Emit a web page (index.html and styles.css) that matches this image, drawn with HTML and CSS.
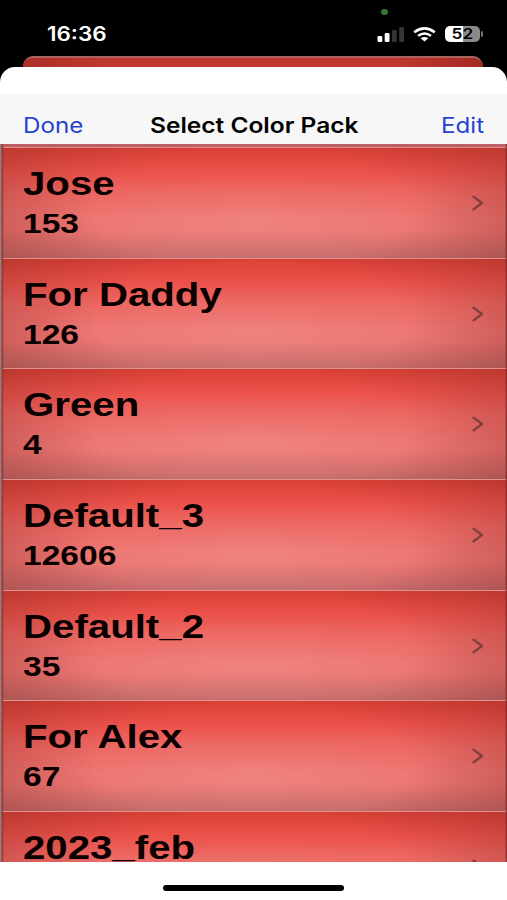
FILE: index.html
```html
<!DOCTYPE html>
<html lang="en">
<head>
    <meta charset="UTF-8">
    <meta name="viewport" content="width=device-width, initial-scale=1.0">
    <title>Select Color Pack</title>
    <link rel="stylesheet" href="styles.css">
</head>
<body>
<div class="status-bar">
    <span class="time"><span class="wide">16:36</span></span>
    <span class="camera-dot"></span>
    <div class="indicators">
        <svg class="signal" width="27" height="15" viewBox="0 0 27 15">
            <rect x="0.5" y="9" width="4.8" height="6" rx="1.2" fill="#fff"/>
            <rect x="7.7" y="6" width="4.8" height="9" rx="1.2" fill="#fff"/>
            <rect x="15" y="3" width="4.8" height="12" rx="1.2" fill="#353535"/>
            <rect x="22.2" y="0" width="4.8" height="15" rx="1.2" fill="#353535"/>
        </svg>
        <svg class="wifi" width="23" height="15" viewBox="0 0 23 15">
            <path d="M1.2 5.2Q11.5-2.4 21.8 5.2" fill="none" stroke="#fff" stroke-width="2.5"/>
            <path d="M5 8.9Q11.5 4 18 8.9" fill="none" stroke="#fff" stroke-width="2.4"/>
            <path d="M7.7 11.2Q11.5 8.6 15.3 11.2L11.5 14.6Z" fill="#fff"/>
        </svg>
        <div class="battery"><span class="wide">52</span></div>
    </div>
</div>
<div class="back-card"></div>
<div class="sheet">
    <div class="nav">
        <span class="nav-btn left"><span class="wide">Done</span></span>
        <span class="nav-title"><span class="wide">Select Color Pack</span></span>
        <span class="nav-btn right"><span class="wide">Edit</span></span>
    </div>
    <div class="list">
        <div class="row">
            <div class="info"><div class="name">Jose</div><div class="count">153</div></div>
            <svg class="chevron" viewBox="0 0 12 16"><path d="M1.5 1.7L10 8L1.5 14.3"/></svg>
        </div>
        <div class="row">
            <div class="info"><div class="name">For Daddy</div><div class="count">126</div></div>
            <svg class="chevron" viewBox="0 0 12 16"><path d="M1.5 1.7L10 8L1.5 14.3"/></svg>
        </div>
        <div class="row">
            <div class="info"><div class="name">Green</div><div class="count">4</div></div>
            <svg class="chevron" viewBox="0 0 12 16"><path d="M1.5 1.7L10 8L1.5 14.3"/></svg>
        </div>
        <div class="row">
            <div class="info"><div class="name">Default<span class="underscore">_</span>3</div><div class="count">12606</div></div>
            <svg class="chevron" viewBox="0 0 12 16"><path d="M1.5 1.7L10 8L1.5 14.3"/></svg>
        </div>
        <div class="row">
            <div class="info"><div class="name">Default<span class="underscore">_</span>2</div><div class="count">35</div></div>
            <svg class="chevron" viewBox="0 0 12 16"><path d="M1.5 1.7L10 8L1.5 14.3"/></svg>
        </div>
        <div class="row">
            <div class="info"><div class="name">For Alex</div><div class="count">67</div></div>
            <svg class="chevron" viewBox="0 0 12 16"><path d="M1.5 1.7L10 8L1.5 14.3"/></svg>
        </div>
        <div class="row">
            <div class="info"><div class="name">2023<span class="underscore">_</span>feb</div></div>
            <svg class="chevron" viewBox="0 0 12 16"><path d="M1.5 1.7L10 8L1.5 14.3"/></svg>
        </div>
    </div>
    <div class="bottom">
        <div class="home-bar"></div>
    </div>
</div>
</body>
</html>
```
FILE: styles.css
```css
* {
    box-sizing: border-box;
}

body {
    margin: 0;
    height: 900px;
    overflow: hidden;
    background-color: #000;
    font-family: Inter, "Liberation Sans", sans-serif;
    display: flex;
    flex-direction: column;
}

.wide {
    display: inline-block;
    transform: scaleX(1.15);
    transform-origin: left center;
    white-space: nowrap;
}

.status-bar {
    position: relative;
    flex: none;
    height: 56px;
    padding: 12px 24px 0 47px;
    display: flex;
    justify-content: space-between;
    align-items: center;
    color: #fff;
}

.time {
    font-size: 19.5px;
    font-weight: 600;
}

.camera-dot {
    position: absolute;
    left: 381px;
    top: 9px;
    width: 7px;
    height: 6px;
    border-radius: 50%;
    background-color: #35793a;
}

.indicators {
    display: flex;
    align-items: center;
    gap: 9px;
}

.battery {
    position: relative;
    width: 35px;
    height: 16px;
    margin-right: 3px;
    border-radius: 5px;
    background: linear-gradient(90deg, #fff 52%, #8a8a8a 52%);
    color: #000;
    font-size: 15px;
    font-weight: 600;
    line-height: 16px;
    text-align: center;
}

.battery .wide {
    transform-origin: center;
}

.battery::after {
    content: "";
    position: absolute;
    right: -3px;
    top: 5px;
    width: 2px;
    height: 6px;
    border-radius: 0 2px 2px 0;
    background-color: #777;
}

.back-card {
    flex: none;
    height: 11px;
    margin: 0 24px 0 23px;
    border-top: 2px solid #a96460;
    border-radius: 10px 10px 0 0;
    background: linear-gradient(90deg, #ad2d27, #c1382f 20%, #c1382f 80%, #a52823);
}

.sheet {
    flex: 1;
    display: flex;
    flex-direction: column;
    min-height: 0;
    padding-top: 27px;
    border-radius: 15px 15px 0 0;
    background-color: #fff;
}

.nav {
    flex: none;
    height: 50px;
    padding: 13px 23px 0;
    display: grid;
    grid-template-columns: 127px 1fr 43px;
    align-items: center;
    background-color: #f7f7f7;
    font-size: 21px;
}

.nav-btn {
    color: #2442cf;
}

.nav-title {
    padding-bottom: 2px;
    color: #000;
    font-size: 21.3px;
    font-weight: 600;
}

.list {
    flex: none;
    position: relative;
    height: 718px;
    padding-top: 3px;
    overflow: hidden;
    background-color: #bd6066;
}

/* thin shaded edges of the table */
.list::after {
    content: "";
    position: absolute;
    inset: 0;
    background: linear-gradient(90deg, #a87674 0, #a87674 1px, #823c3a 2px, transparent 4px, transparent 505px, #7d2521 507px);
}

.row {
    height: 110.7px;
    padding: 17px 23px 0 23px;
    display: flex;
    justify-content: space-between;
    border-top: 1.5px solid #e0938e;
    background:
        radial-gradient(ellipse 350px 130px at 50% 56%, rgba(110, 35, 30, 0) 45%, rgba(110, 35, 30, 0.38) 100%),
        linear-gradient(180deg, #dc4036 0, #eb524b 22%, rgba(236, 90, 85, 0.55) 40%, rgba(236, 108, 103, 0) 65%, rgba(150, 95, 98, 0) 75%, rgba(150, 95, 98, 0.45) 100%),
        radial-gradient(ellipse 300px 140px at 50% 65%, #ef827e 0, #ed7874 50%, #e46864 100%);
}

.info {
    color: #0b0000;
    font-family: "Liberation Sans", Arial, sans-serif;
    font-weight: bold;
    white-space: nowrap;
    transform: scaleX(1.2);
    transform-origin: left top;
}

.name {
    font-size: 33.5px;
    line-height: 37px;
}

.underscore {
    position: relative;
    top: -2px;
}

.count {
    margin-top: 5px;
    font-size: 28px;
    line-height: 34px;
}

.chevron {
    width: 12px;
    height: 16px;
    margin-top: 30px;
    fill: none;
    stroke: #7c403e;
    stroke-width: 2.3;
    stroke-linecap: round;
    stroke-linejoin: round;
}

.bottom {
    flex: 1;
    padding-top: 23px;
    background-color: #fff;
}

.home-bar {
    width: 181px;
    height: 6px;
    margin: 0 auto;
    border-radius: 3px;
    background-color: #000;
}
```
